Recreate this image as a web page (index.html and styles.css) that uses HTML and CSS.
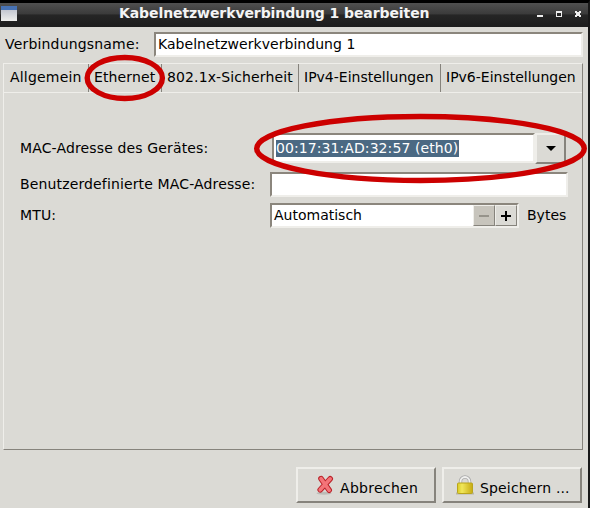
FILE: index.html
```
<!DOCTYPE html>
<html lang="de">
<head>
<meta charset="utf-8">
<title>Kabelnetzwerkverbindung 1 bearbeiten</title>
<link rel="stylesheet" href="styles.css">
</head>
<body>
<div class="window">
  <header class="titlebar">
    <span class="app-icon"></span>
    <h1 class="title">Kabelnetzwerkverbindung 1 bearbeiten</h1>
    <svg class="controls" width="48" height="24" viewBox="0 0 48 24" shape-rendering="crispEdges">
      <path fill="#eee" d="M1 12h6v2H1zM20 8h6v6h-6zM39 8h2v1h2V8h2v2h-1v2h1v2h-2v-1h-2v1h-2v-2h1v-2h-1z"/>
      <path fill="#292929" d="M21 10h4v3h-4z"/>
    </svg>
  </header>
  <main class="content">
    <div class="name-row">
      <label class="name-label">Verbindungsname:</label>
      <div class="entry name-entry">Kabelnetzwerkverbindung 1</div>
    </div>
    <section class="notebook">
      <nav class="tabs">
        <span class="tab tab-general">Allgemein</span>
        <span class="tab tab-ethernet">Ethernet</span>
        <span class="tab tab-security">802.1x-Sicherheit</span>
        <span class="tab tab-ipv4">IPv4-Einstellungen</span>
        <span class="tab tab-ipv6">IPv6-Einstellungen</span>
      </nav>
      <div class="form">
        <label>MAC-Adresse des Gerätes:</label>
        <div class="combo">
          <div class="entry combo-entry"><span class="selection">00:17:31:AD:32:57 (eth0)</span></div>
          <div class="combo-button"><svg width="10" height="5" viewBox="0 0 10 5"><path d="M0 0h10L5 5z"/></svg></div>
        </div>
        <label>Benutzerdefinierte MAC-Adresse:</label>
        <div class="entry custom-entry"></div>
        <label>MTU:</label>
        <div class="mtu">
          <div class="entry spin">
            <span class="spin-text">Automatisch</span>
            <span class="step step-off"><svg width="10" height="10" viewBox="0 0 10 10"><path fill="#96938b" d="M0 4h10v2H0z"/></svg></span>
            <span class="step"><svg width="10" height="10" viewBox="0 0 10 10"><path d="M0 4h4V0h2v4h4v2H6v4H4V6H0z"/></svg></span>
          </div>
          <span class="unit">Bytes</span>
        </div>
      </div>
    </section>
    <footer class="actions">
      <div class="button cancel">
        <svg class="icon" width="18" height="20" viewBox="0 0 18 20">
          <ellipse cx="8" cy="18.2" rx="7.5" ry="1.5" fill="#bdbcb7"/>
          <path d="M5 3.6L13.2 15.2M14.2 3.8L4.2 14.8" stroke="#b92229" stroke-width="5.6" stroke-linecap="round"/>
          <path d="M5 3.6L13.2 15.2M14.2 3.8L4.2 14.8" stroke="#f47478" stroke-width="3.6" stroke-linecap="round"/>
        </svg>
        <span>Abbrechen</span>
      </div>
      <div class="button save">
        <svg class="icon" width="18" height="20" viewBox="0 0 18 20">
          <defs><linearGradient id="gold"><stop offset="0" stop-color="#d9cb24"/><stop offset=".3" stop-color="#f1e75a"/><stop offset="1" stop-color="#c7ab13"/></linearGradient></defs>
          <path d="M0 18.5h18" stroke="#b8b6aa" stroke-width="2"/>
          <path d="M4.5 9V6.5a4.5 4.5 0 0 1 9 0V9" fill="none" stroke="#aaa" stroke-width="3.4"/>
          <path d="M4.5 9V6.5a4.5 4.5 0 0 1 9 0V9" fill="none" stroke="#f0f0ee" stroke-width="1.8"/>
          <rect x="1.5" y="8" width="15" height="10.5" rx="1" fill="url(#gold)" stroke="#b9a51c"/>
        </svg>
        <span>Speichern ...</span>
      </div>
    </footer>
  </main>
  <svg class="marks" width="590" height="508" viewBox="0 0 590 508">
    <ellipse cx="124.8" cy="78" rx="37.6" ry="20.5"/>
    <ellipse cx="420.5" cy="148.5" rx="163.8" ry="32"/>
  </svg>
</div>
</body>
</html>
```
FILE: styles.css
```
* { box-sizing: border-box; }
body {
  margin: 0;
  background: #dbdad5;
  font: 14px/18px "DejaVu Sans", sans-serif;
  color: #000;
}
svg { display: block; }
.window {
  position: relative;
  width: 590px;
  height: 508px;
  overflow: hidden;
  border-top: 3px solid #000;
  border-right: 2px solid #181818;
  background: #dbdad5;
  white-space: nowrap;
}
.titlebar {
  display: flex;
  align-items: flex-start;
  height: 24px;
  margin-right: -1px;
  background: linear-gradient(#505050, #3b3b3b 45%, #252525 50%, #1d1d1d);
}
.app-icon {
  width: 16px;
  height: 15px;
  margin: 3px 0 0 1px;
  border-top: 4px solid #4772b4;
  background: linear-gradient(#c3c7d0, #eeeeec);
}
.title {
  width: 311px;
  margin: 1px 0 0 102px;
  font-size: 14px;
  line-height: 18px;
  letter-spacing: -0.09px;
  color: #f4f4f4;
}
.controls { margin-left: 106px; }
.content { padding: 5px 0 0 3px; }
.name-row { display: flex; align-items: center; }
.name-label {
  flex: none;
  width: 151px;
  padding: 0 0 1px 2px;
  letter-spacing: 0.18px;
}
.entry {
  height: 25px;
  padding: 1px 2px;
  border: 2px solid;
  border-color: #8b867d #efeeea #efeeea #8b867d;
  background: #fff;
}
.name-entry { flex: none; width: 429px; letter-spacing: 0.04px; }
.notebook {
  width: 580px;
  height: 387px;
  margin-top: 6px;
  border: 1px solid;
  border-color: #efeeea #86837c #86837c #efeeea;
}
.tabs {
  display: flex;
  height: 29px;
  border-bottom: 1px solid #efeeea;
}
.tab { padding: 4px 0 0 5px; border-right: 1px solid #86837c; }
.tab-general { width: 85px; padding-left: 6px; letter-spacing: 0.2px; }
.tab-ethernet { width: 73px; letter-spacing: 0.12px; }
.tab-security { width: 137px; letter-spacing: 0.12px; }
.tab-ipv4 { width: 142px; }
.tab-ipv6 { flex: 1; border-right: 0; }
.form {
  display: grid;
  grid-template-columns: 250px 298px;
  grid-template-rows: 33px 25px 25px;
  row-gap: 6px;
  align-items: center;
  margin: 40px 0 0 16px;
}
.form label { padding-bottom: 2px; letter-spacing: 0.14px; }
.form label:first-child { padding-bottom: 3px; }
.combo { display: flex; align-self: start; height: 31px; padding-left: 2px; }
.combo-entry { width: 263px; height: 30px; padding: 5px 2px; }
.selection {
  display: block;
  width: 183px;
  height: 17px;
  line-height: 17px;
  letter-spacing: 0.08px;
  background: #4b6983;
  color: #fff;
}
.combo-button {
  display: flex;
  align-items: center;
  justify-content: center;
  width: 31px;
  height: 31px;
  border: 2px solid;
  border-color: #efeeea #86837c #86837c #efeeea;
}
.mtu { display: flex; align-items: center; gap: 8px; }
.spin { display: flex; width: 249px; padding: 0; }
.spin-text { flex: 1; padding: 1px 2px; }
.unit { padding-bottom: 1px; }
.step {
  display: flex;
  align-items: center;
  justify-content: center;
  width: 22px;
  background: #dbdad5;
  border: 1px solid;
  border-color: #efeeea #86837c #86837c #efeeea;
}
.step-off { background: #c7c4bc; }
.actions { display: flex; gap: 6px; margin: 17px 0 0 293px; }
.button {
  display: flex;
  gap: 6px;
  width: 140px;
  height: 36px;
  padding: 6px 0 0 18px;
  border: 2px solid;
  border-color: #efeeea #86837c #86837c #efeeea;
}
.button span { padding-top: 4px; }
.cancel { letter-spacing: 0.3px; }
.save { padding-left: 12px; letter-spacing: 0.16px; }
.marks {
  position: absolute;
  left: 0;
  top: -3px;
  fill: none;
  stroke: #c00;
  stroke-width: 5.4;
}
```
